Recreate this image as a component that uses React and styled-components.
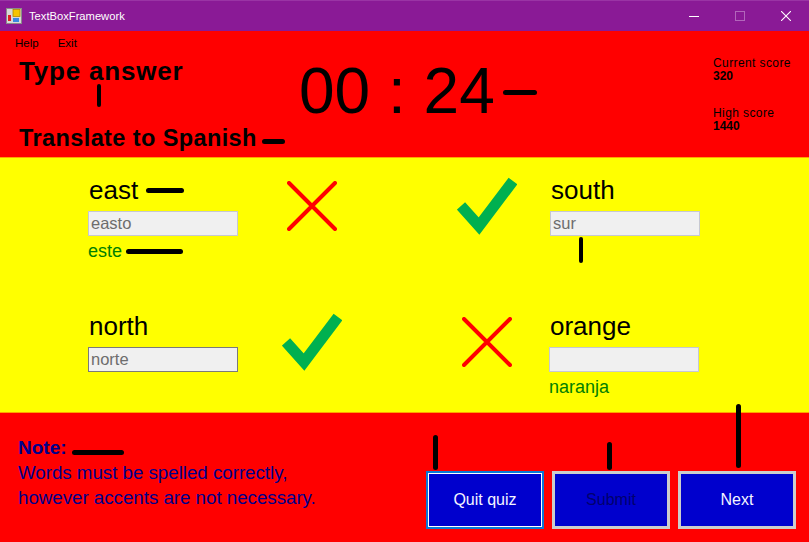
import React from 'react';
import styled, { createGlobalStyle } from 'styled-components';

const GlobalStyle = createGlobalStyle`
  html, body {
    margin: 0;
    padding: 0;
    background: #ffffff;
  }
  * {
    box-sizing: border-box;
  }
`;

const Window = styled.div`
  position: relative;
  width: 809px;
  height: 542px;
  display: flex;
  flex-direction: column;
  overflow: hidden;
  font-family: "Liberation Sans", Arial, sans-serif;
`;

// ---- title bar ----
const TitleBar = styled.div`
  height: 31px;
  flex: none;
  display: flex;
  align-items: center;
  background: #8a1a96;
  border-top: 1px solid #9a34a5;
  color: #ffffff;
`;

const AppIcon = styled.svg`
  margin-left: 6px;
  width: 16px;
  height: 16px;
  flex: none;
`;

const Caption = styled.span`
  margin-left: 7px;
  font-size: 11.2px;
  flex: 1;
`;

const CaptionButton = styled.div`
  width: 46px;
  height: 30px;
  display: flex;
  align-items: center;
  justify-content: center;
`;

// ---- top red panel ----
const TopPanel = styled.div`
  height: 126px;
  flex: none;
  background: #ff0000;
  display: flex;
  flex-direction: column;
`;

const MenuBar = styled.div`
  height: 23px;
  display: flex;
  align-items: center;
  gap: 19px;
  padding-left: 15px;
  font-size: 11.5px;
  color: #000;
`;

const HeaderRow = styled.div`
  flex: 1;
  display: grid;
  grid-template-columns: 280px 414px 1fr;
  padding-left: 19px;
`;

const LeftHeads = styled.div`
  display: flex;
  flex-direction: column;
  padding-top: 4px;
`;

const Heading = styled.div`
  font-weight: bold;
  font-size: ${p => p.$size}px;
  letter-spacing: ${p => p.$track || 0}px;
  line-height: 1;
  margin-top: ${p => p.$gap || 0}px;
  color: #000;
  white-space: nowrap;
`;

const Timer = styled.div`
  font-size: 64px;
  line-height: 1;
  padding-top: 5px;
  color: #000;
  white-space: nowrap;
`;

const Scores = styled.div`
  display: flex;
  flex-direction: column;
  padding-top: 2px;
  font-size: 12px;
  color: #000;
`;

const ScoreLabel = styled.div`
  line-height: 14px;
  letter-spacing: 0.4px;
  margin-top: ${p => p.$gap || 0}px;
`;

const ScoreValue = styled.div`
  line-height: 14px;
  margin-top: -1px;
  font-weight: bold;
`;

// ---- yellow quiz panel ----
const QuizPanel = styled.div`
  height: 256px;
  flex: none;
  background: #ffff00;
  border-top: 1px solid #ffa400;
  border-bottom: 1px solid #ffa400;
  display: grid;
  grid-template-columns: 369px 1fr;
  grid-template-rows: 136px 1fr;
  padding: 19px 0 0 88px;
`;

const Cell = styled.div`
  display: flex;
  align-items: flex-start;
`;

const WordBlock = styled.div`
  width: 150px;
  display: flex;
  flex-direction: column;
  margin-left: ${p => p.$offset || 0}px;
`;

const Word = styled.div`
  font-size: 26px;
  line-height: 1;
  color: #000;
  padding-left: 1px;
`;

const AnswerBox = styled.div`
  margin-top: 8px;
  height: 25px;
  width: 150px;
  background: #f0f0f0;
  border: 1px solid ${p => (p.$focused ? '#7a7a7a' : '#c6c8d2')};
  color: #6d6d6d;
  font-size: 16.5px;
  line-height: 23px;
  padding-left: 2px;
`;

const Correction = styled.div`
  margin-top: 6px;
  font-size: 18px;
  line-height: 1;
  color: #008000;
`;

const IconBox = styled.div`
  width: 60px;
  height: 60px;
  margin-top: -1px;
  margin-left: ${p => p.$offset || 0}px;
  display: flex;
  align-items: center;
  justify-content: center;
  flex: none;
`;

// ---- bottom red panel ----
const BottomPanel = styled.div`
  flex: 1;
  background: #ff0000;
  display: flex;
  justify-content: space-between;
`;

const NoteBlock = styled.div`
  padding: 23px 0 0 18px;
  color: #00008b;
`;

const NoteTitle = styled.div`
  font-weight: bold;
  font-size: 19px;
  line-height: 24px;
`;

const NoteLine = styled.div`
  font-size: 18.7px;
  line-height: 25px;
  white-space: nowrap;
`;

const ButtonRow = styled.div`
  align-self: flex-end;
  display: flex;
  gap: 8px;
  padding: 0 13px 13px 0;
`;

const Button = styled.button`
  width: 118px;
  height: 58px;
  background: #0000cd;
  border: ${p => (p.$active ? '2px solid #0a78d6' : '3px solid #cccccc')};
  box-shadow: ${p => (p.$active ? 'inset 0 0 0 1px #ffffff' : 'none')};
  color: ${p => (p.$disabled ? '#00006e' : '#f4f4ff')};
  font-family: "Liberation Sans", Arial, sans-serif;
  font-size: 16px;
  padding: 0;
`;

// hand-drawn black marks lying over the form
const Mark = styled.div`
  position: absolute;
  left: ${p => p.$x}px;
  top: ${p => p.$y}px;
  width: ${p => p.$w}px;
  height: ${p => p.$h}px;
  background: #000;
  border-radius: 3px;
`;

const marks = [
  [97, 84, 4, 23],
  [262, 139, 23, 5],
  [503, 90, 34, 5],
  [146, 188, 38, 5],
  [126, 249, 57, 5],
  [579, 237, 4, 26],
  [72, 450, 52, 5],
  [433, 435, 5, 35],
  [607, 442, 5, 28],
  [736, 404, 5, 64],
];

const Cross = () => (
  <svg width="50" height="50" viewBox="0 0 50 50">
    <path d="M2 2 L48 48 M48 2 L2 48" stroke="#ff0000" strokeWidth="4" strokeLinecap="round" />
  </svg>
);

const Tick = () => (
  <svg width="60" height="60" viewBox="0 0 60 60">
    <polyline points="4,30 22,50 56,5" fill="none" stroke="#00b050" strokeWidth="11" strokeLinejoin="miter" />
  </svg>
);

const App = () => {
  return (
    <>
      <GlobalStyle />
      <Window>
        <TitleBar>
          <AppIcon viewBox="0 0 16 16">
            <rect x="0.5" y="0.5" width="15" height="15" fill="#d8d8d8" stroke="#8a8a8a" />
            <rect x="7" y="1.5" width="7" height="7" fill="#f5c400" stroke="#b08a00" strokeWidth="0.8" />
            <rect x="2" y="7" width="3" height="6" fill="#e02020" />
            <rect x="7" y="10" width="6" height="4" fill="#3a86e0" />
          </AppIcon>
          <Caption>TextBoxFramework</Caption>
          <CaptionButton>
            <svg width="10" height="10" viewBox="0 0 10 10">
              <path d="M0 5.5 H10" stroke="#fff" strokeWidth="1" />
            </svg>
          </CaptionButton>
          <CaptionButton>
            <svg width="10" height="10" viewBox="0 0 10 10">
              <rect x="0.5" y="0.5" width="9" height="9" fill="none" stroke="#b266bb" strokeWidth="1" />
            </svg>
          </CaptionButton>
          <CaptionButton>
            <svg width="10" height="10" viewBox="0 0 10 10">
              <path d="M0 0 L10 10 M10 0 L0 10" stroke="#fff" strokeWidth="1.1" />
            </svg>
          </CaptionButton>
        </TitleBar>

        <TopPanel>
          <MenuBar>
            <span>Help</span>
            <span>Exit</span>
          </MenuBar>
          <HeaderRow>
            <LeftHeads>
              <Heading $size={26} $track={0.8}>Type answer</Heading>
              <Heading $size={23.5} $track={0.4} $gap={43}>Translate to Spanish</Heading>
            </LeftHeads>
            <Timer>00 : 24</Timer>
            <Scores>
              <ScoreLabel>Current score</ScoreLabel>
              <ScoreValue>320</ScoreValue>
              <ScoreLabel $gap={23}>High score</ScoreLabel>
              <ScoreValue>1440</ScoreValue>
            </Scores>
          </HeaderRow>
        </TopPanel>

        <QuizPanel>
          <Cell>
            <WordBlock>
              <Word>east</Word>
              <AnswerBox>easto</AnswerBox>
              <Correction>este</Correction>
            </WordBlock>
            <IconBox $offset={44}><Cross /></IconBox>
          </Cell>
          <Cell>
            <IconBox><Tick /></IconBox>
            <WordBlock $offset={33}>
              <Word>south</Word>
              <AnswerBox>sur</AnswerBox>
            </WordBlock>
          </Cell>
          <Cell>
            <WordBlock>
              <Word>north</Word>
              <AnswerBox $focused>norte</AnswerBox>
            </WordBlock>
            <IconBox $offset={44}><Tick /></IconBox>
          </Cell>
          <Cell>
            <IconBox><Cross /></IconBox>
            <WordBlock $offset={32}>
              <Word>orange</Word>
              <AnswerBox></AnswerBox>
              <Correction>naranja</Correction>
            </WordBlock>
          </Cell>
        </QuizPanel>

        <BottomPanel>
          <NoteBlock>
            <NoteTitle>Note:</NoteTitle>
            <NoteLine>Words must be spelled correctly,</NoteLine>
            <NoteLine>however accents are not necessary.</NoteLine>
          </NoteBlock>
          <ButtonRow>
            <Button $active>Quit quiz</Button>
            <Button $disabled>Submit</Button>
            <Button>Next</Button>
          </ButtonRow>
        </BottomPanel>

        {marks.map(([x, y, w, h], i) => (
          <Mark key={i} $x={x} $y={y} $w={w} $h={h} />
        ))}
      </Window>
    </>
  );
};

export default App;
